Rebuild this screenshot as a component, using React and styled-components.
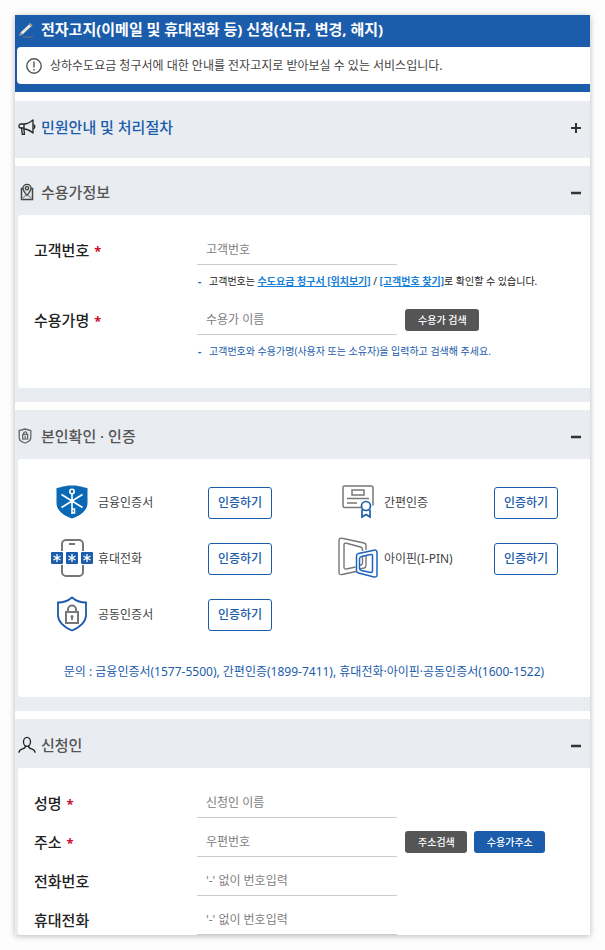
import React, { useState } from 'react';
import styled, { createGlobalStyle } from 'styled-components';

const blue = '#1b5cab';

const GlobalStyle = createGlobalStyle`
  * {
    box-sizing: border-box;
  }

  body {
    margin: 0;
    padding: 15px;
    background: #fdfdfd;
    color: #444;
    font-family: "Noto Sans", "Noto Sans CJK KR", sans-serif;
    font-size: 12px;
    line-height: 20px;
  }

  h1, h2, p {
    margin: 0;
  }

  button, input {
    font-family: inherit;
  }
`;

const Page = styled.main`
  background: #fff;
  box-shadow: 0 1px 6px rgba(0, 0, 0, 0.28);
`;

const Header = styled.header`
  background: ${blue};
  padding-bottom: 8px;
  margin-bottom: 9px;
`;

const PageTitle = styled.h1`
  display: flex;
  align-items: center;
  gap: 6px;
  height: 32px;
  padding: 0 3px 4px;
  color: #fff;
  font-size: 15px;
  font-weight: 700;
`;

const Notice = styled.p`
  display: flex;
  align-items: center;
  gap: 8px;
  min-height: 37px;
  margin-left: 2px;
  padding-left: 9px;
  background: #fff;
  border-radius: 4px 0 0 4px;
`;

const Panel = styled.section`
  margin-bottom: ${({ $last }) => ($last ? 0 : 8)}px;
  padding: 4px 0 ${({ $last, $open }) => ($last ? 0 : $open ? 14 : 8)}px 3px;
  background: #e9ecf1;
`;

const PanelHead = styled.div`
  display: flex;
  align-items: center;
  height: 45px;
  padding-right: 8px;
`;

const PanelTitle = styled.h2`
  flex: 1;
  display: flex;
  align-items: center;
  gap: 5px;
  padding-bottom: 1px;
  color: ${({ $active }) => ($active ? blue : '#555')};
  font-size: 15px;
  font-weight: 500;
`;

const Toggle = styled.button`
  display: flex;
  padding: 0;
  border: 0;
  background: none;
  cursor: pointer;
`;

const PanelBody = styled.div`
  background: #fff;
  border-radius: 3px 0 0 3px;
`;

const Form = styled.form`
  display: grid;
  gap: 9px;
  padding: 20px 16px ${({ $flush }) => ($flush ? 0 : 22)}px;
`;

const FormRow = styled.div`
  display: grid;
  grid-template-columns: 163px 1fr;
`;

const Label = styled.label`
  display: flex;
  align-items: center;
  gap: 5px;
  height: 30px;
  padding-bottom: 1px;
  color: #222;
  font-size: 15px;
  font-weight: 500;
`;

const Star = styled.span`
  padding-top: 3px;
  color: #c8102e;
  font-size: 13px;
  font-weight: 700;
`;

const Controls = styled.div`
  display: flex;
  align-items: center;
  gap: 7px;
`;

const TextInput = styled.input`
  width: 200px;
  height: 30px;
  margin-right: 1px;
  padding: 0 9px;
  border: 0;
  border-bottom: 1px solid #ccc;
  background: #fff;
  font-size: 12px;

  &::placeholder {
    color: #808080;
    opacity: 1;
  }
`;

const SmallButton = styled.button`
  height: 22px;
  padding: 0 12px 1px 13px;
  border: 0;
  border-radius: 3px;
  background: ${({ $primary }) => ($primary ? blue : '#555')};
  color: #fff;
  font-size: 10px;
  font-weight: 500;
  white-space: nowrap;
`;

const Hint = styled.p`
  padding: 9px 0 7px;
  color: ${({ $blue }) => ($blue ? blue : '#222')};
  font-size: 10px;
  line-height: 15px;

  &::before {
    content: '-';
    display: inline-block;
    width: 11px;
    padding-left: 1px;
    color: ${blue};
    font-weight: 700;
  }

  a {
    color: #1480d8;
    font-weight: 700;
  }
`;

const AuthGrid = styled.ul`
  display: grid;
  grid-template-columns: 1fr 1fr;
  row-gap: 24px;
  margin: 0;
  padding: 28px 0 31px;
  list-style: none;
`;

const AuthItem = styled.li`
  display: flex;
  align-items: center;
  height: 32px;
  padding-left: 29px;
`;

const AuthIcon = styled.span`
  display: flex;
  justify-content: center;
  width: 50px;
  padding-bottom: 3px;
`;

const AuthName = styled.span`
  width: 111px;
  padding-left: 1px;
`;

const AuthButton = styled.button`
  width: 64px;
  height: 32px;
  padding: 0 0 2px;
  border: 1px solid ${blue};
  border-radius: 3px;
  background: #fff;
  color: ${blue};
  font-size: 12px;
  font-weight: 500;
`;

const Contact = styled.p`
  padding-bottom: 15px;
  color: ${blue};
  text-align: center;
`;

const PencilIcon = () => (
  <svg width="17" height="18" viewBox="0 0 17 18" fill="none">
    <path d="M3.5 13.5 12.5 5" stroke="#ece8e0" strokeWidth="3" />
    <path d="m11.5 3.5 2.5 2.5" stroke="#999" strokeWidth="2" />
    <path d="M1 16 2.2 12.2l2.6 2.6Z" fill="#999" />
    <path d="M5 17h10" stroke="#6c7480" />
  </svg>
);

const AlertIcon = () => (
  <svg width="16" height="16" viewBox="0 0 16 16" fill="none" stroke="#555" strokeWidth="1.4">
    <circle cx="8" cy="8" r="7.2" />
    <path d="M8 3.5v6M8 11v1.6" />
  </svg>
);

const MegaphoneIcon = () => (
  <svg width="18" height="18" viewBox="0 0 18 18" fill="none" stroke="#222" strokeWidth="1.3" strokeLinejoin="round">
    <path d="M6 6c3.5 0 6-1.500 9-4v13c-3-2.500-5.500-4-9-4" />
    <path d="M6 6H3C.3 6 .3 10 3 10h3V6M3.500 10l.8 6.300h2.200L5.800 10.500" />
    <path d="M15.200 7c2.200 0 2.200 3.500 0 3.500" />
  </svg>
);

const MapIcon = () => (
  <svg width="18" height="18" viewBox="0 0 18 18" fill="none" stroke="#444" strokeWidth="1.3">
    <path d="M5.5 5.5h-2v11h11v-11h-2" strokeWidth="1.5" />
    <path d="M9 12.5c-2.500-3-4-5-4-7.200a4 4 0 0 1 8 0c0 2.200-1.500 4.200-4 7.200Z" fill="#ddd" />
    <circle cx="9" cy="5.2" r="1.6" />
    <path d="m4 16 4-4M14 16l-4-4" stroke="#999" />
  </svg>
);

const LockShieldIcon = () => (
  <svg width="18" height="18" viewBox="0 0 18 18" fill="none" stroke="#666" strokeWidth="1.3">
    <path d="M7 2 1.2 3.5v7c0 3 2.3 4.5 5.8 5.5 3.500-1 5.800-2.500 5.800-5.500v-7Z" />
    <rect x="4.7" y="7.5" width="5" height="4.5" />
    <path d="M5.700 7.500V6.300a1.500 1.500 0 0 1 3 0v1.200M7.200 9v2" />
  </svg>
);

const PersonIcon = () => (
  <svg width="18" height="18" viewBox="0 0 18 18" fill="none" stroke="#222" strokeWidth="1.3">
    <ellipse cx="9" cy="5.8" rx="3.5" ry="4.5" />
    <path d="M7.500 10c0 2-1 2.300-3 2.800-2.500.7-3.500 1.700-3.700 4M10.500 10c0 2 1 2.300 3 2.800 2.500.7 3.500 1.700 3.700 4" />
  </svg>
);

const ToggleIcon = ({ open }) => (
  <svg width="12" height="12" viewBox="0 0 12 12" stroke="#333" strokeWidth={open ? 2.5 : 2}>
    <path d={open ? 'M1 6h10' : 'M1 6h10M6 1v10'} />
  </svg>
);

const KeyShield = () => (
  <svg width="32" height="34" viewBox="0 0 32 34" fill="none">
    <path d="M.5 3C5 2.500 8 .5 16 .5S27 2.500 31.500 3v15c0 8-8 13-15.500 15.500C8.500 31 .5 26 .5 18Z" fill="#0969b5" />
    <g stroke="#fff" strokeWidth="1.6">
      <circle cx="16" cy="6.5" r="2.2" />
      <path d="M16 9v20M5.500 9.500 16 16l10.500-6.500M5.500 22.500 16 16l10.500 6.500M16 24h2.500v4H16" />
    </g>
  </svg>
);

const PhonePin = () => (
  <svg width="42" height="38" viewBox="0 0 42 38" fill="none">
    <rect x="11" y="1" width="21" height="36" rx="4" stroke="#777" strokeWidth="2" />
    <path d="M18 5h6" stroke="#777" strokeWidth="2" />
    {[0, 15, 30].map((x) => (
      <g key={x}>
        <rect x={x - 1} y="12" width="14" height="14" fill="#fff" />
        <rect x={x} y="13" width="12" height="12" rx="1" fill={blue} />
        <path d={`M${x + 6} 15v8M${x + 2.5} 17l7 4M${x + 9.5} 17l-7 4`} stroke="#fff" strokeWidth="1.3" />
      </g>
    ))}
  </svg>
);

const JointShield = () => (
  <svg width="32" height="36" viewBox="0 0 32 36" fill="none">
    <path d="M16 1.500c-4 3.500-8.500 5-14 5v12.500c0 7.500 6 12 14 15.500 8-3.500 14-8 14-15.500V6.500c-5.500 0-10-1.500-14-5Z" stroke={blue} strokeWidth="1.8" />
    <rect x="10" y="16" width="12" height="11" stroke="#777" strokeWidth="2" />
    <path d="M12 16v-2.500a4 4 0 0 1 8 0V16M16 20v4" stroke="#777" strokeWidth="2" />
    <circle cx="16" cy="20.5" r="1.5" fill="#777" />
  </svg>
);

const Certificate = () => (
  <svg width="32" height="34" viewBox="0 0 32 34" fill="none" strokeWidth="1.5">
    <g stroke="#777">
      <path d="M19 22.500H3a2 2 0 0 1-2-2v-18a1.500 1.500 0 0 1 1.500-1.500h27A1.500 1.500 0 0 1 31 2.500v18" />
      <rect x="10" y="5" width="12" height="5" />
      <path d="M5 13.500h22M5 18h10" />
    </g>
    <g stroke={blue} strokeWidth="1.7">
      <path d="M20 24.500V32l4-2.500 4 2.500v-7.500" />
      <circle cx="24" cy="21" r="4.5" fill="#fff" />
    </g>
  </svg>
);

const IpinIcon = () => (
  <svg width="40" height="42" viewBox="0 0 40 42" fill="none" strokeLinejoin="round">
    <g stroke="#777" strokeWidth="1.4">
      <path d="M28 13V8.500q0-2-2-2.500L4 1.300Q1 .8 1 3.500v32q0 2.500 3 2L18 34.500" />
      <path d="M24.500 14v-1.500q0-2-2-2.500L8.500 6.200Q6 5.700 6 8v22q0 2.500 2.500 2l9-2" />
      <path d="M28 19v9.500q0 2-2 2.500l-4.500 1M24.500 19.500v6.500q0 1.500-1.500 2l-1 .3" />
    </g>
    <g stroke="#1b63bd" strokeWidth="1.5">
      <path d="M20.500 16.500 36 13.200q3-.5 3 2.300v22.500q0 2.500-3 2L20.500 36q-2-.5-2-2.500V19q0-2 2-2.500Z" />
      <path d="m23.500 19.500 9-2q2-.5 2 1.500v14.500q0 2.500-2 2l-9-2q-2-.5-2-2.200V22q0-2 2-2.500Z" />
    </g>
  </svg>
);

const authMethods = [
  { name: '금융인증서', Icon: KeyShield },
  { name: '간편인증', Icon: Certificate },
  { name: '휴대전화', Icon: PhonePin },
  { name: '아이핀(I-PIN)', Icon: IpinIcon },
  { name: '공동인증서', Icon: JointShield },
];

const Section = ({ title, icon, active, last, defaultOpen = true, children }) => {
  const [open, setOpen] = useState(defaultOpen);

  return (
    <Panel $open={open} $last={last}>
      <PanelHead>
        <PanelTitle $active={active}>{icon}{title}</PanelTitle>
        <Toggle type="button" aria-label={title} aria-expanded={open} onClick={() => setOpen(!open)}>
          <ToggleIcon open={open} />
        </Toggle>
      </PanelHead>
      {open && children && <PanelBody>{children}</PanelBody>}
    </Panel>
  );
};

const Field = ({ id, label, placeholder, required, buttons, hint }) => (
  <FormRow>
    <Label htmlFor={id}>
      {label}
      {required && <Star>*</Star>}
    </Label>
    <div>
      <Controls>
        <TextInput id={id} type="text" placeholder={placeholder} required={required} />
        {buttons}
      </Controls>
      {hint}
    </div>
  </FormRow>
);

const App = () => (
  <>
    <GlobalStyle />
    <Page>
      <Header>
        <PageTitle>
          <PencilIcon />
          전자고지(이메일 및 휴대전화 등) 신청(신규, 변경, 해지)
        </PageTitle>
        <Notice>
          <AlertIcon />
          상하수도요금 청구서에 대한 안내를 전자고지로 받아보실 수 있는 서비스입니다.
        </Notice>
      </Header>

      <Section title="민원안내 및 처리절차" icon={<MegaphoneIcon />} active defaultOpen={false} />

      <Section title="수용가정보" icon={<MapIcon />}>
        <Form>
          <Field
            id="customerNo"
            label="고객번호"
            placeholder="고객번호"
            required
            hint={
              <Hint>
                고객번호는 <a href="#bill">수도요금 청구서 [위치보기]</a> / <a href="#find">[고객번호 찾기]</a>로 확인할 수 있습니다.
              </Hint>
            }
          />
          <Field
            id="customerName"
            label="수용가명"
            placeholder="수용가 이름"
            required
            buttons={<SmallButton type="button">수용가 검색</SmallButton>}
            hint={<Hint $blue>고객번호와 수용가명(사용자 또는 소유자)을 입력하고 검색해 주세요.</Hint>}
          />
        </Form>
      </Section>

      <Section title="본인확인 · 인증" icon={<LockShieldIcon />}>
        <AuthGrid>
          {authMethods.map(({ name, Icon }) => (
            <AuthItem key={name}>
              <AuthIcon><Icon /></AuthIcon>
              <AuthName>{name}</AuthName>
              <AuthButton type="button">인증하기</AuthButton>
            </AuthItem>
          ))}
        </AuthGrid>
        <Contact>문의 : 금융인증서(1577-5500), 간편인증(1899-7411), 휴대전화·아이핀·공동인증서(1600-1522)</Contact>
      </Section>

      <Section title="신청인" icon={<PersonIcon />} last>
        <Form $flush>
          <Field id="name" label="성명" placeholder="신청인 이름" required />
          <Field
            id="address"
            label="주소"
            placeholder="우편번호"
            required
            buttons={
              <>
                <SmallButton type="button">주소검색</SmallButton>
                <SmallButton type="button" $primary>수용가주소</SmallButton>
              </>
            }
          />
          <Field id="phone" label="전화번호" placeholder="'-' 없이 번호입력" />
          <Field id="mobile" label="휴대전화" placeholder="'-' 없이 번호입력" />
        </Form>
      </Section>
    </Page>
  </>
);

export default App;
